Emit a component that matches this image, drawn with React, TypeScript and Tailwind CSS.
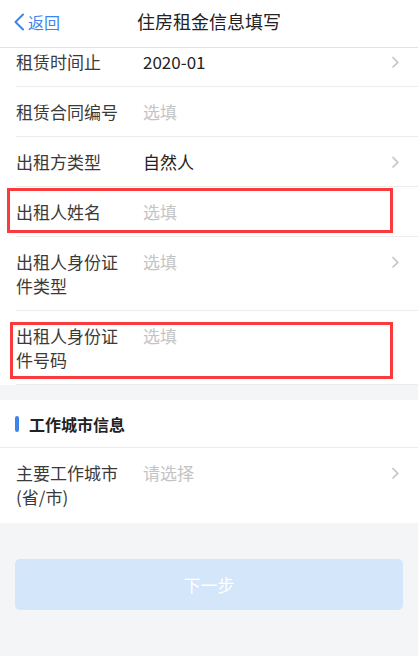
const font = "font-['Noto_Sans_CJK_SC','Noto_Sans',sans-serif]";

type Row = {
  label: string;
  value?: string;
  placeholder?: string;
  arrow?: boolean;
  marked?: "a" | "b";
};

const rows: Row[] = [
  { label: "租赁时间止", value: "2020-01", arrow: true },
  { label: "租赁合同编号", placeholder: "选填" },
  { label: "出租方类型", value: "自然人", arrow: true },
  { label: "出租人姓名", placeholder: "选填", marked: "a" },
  { label: "出租人身份证件类型", placeholder: "选填", arrow: true },
  { label: "出租人身份证件号码", placeholder: "选填", marked: "b" },
];

function Arrow() {
  return (
    <svg className="w-[10px] h-6 shrink-0" viewBox="0 0 10 24" fill="none">
      <path d="M3 7.5l4.8 4.8L3 17" stroke="#c6c6c6" strokeWidth="1.7" strokeLinecap="round" strokeLinejoin="round" />
    </svg>
  );
}

function FormRow({ row, first }: { row: Row; first?: boolean }) {
  return (
    <div className={`relative pl-4 ${first ? "-mt-[11px]" : ""}`}>
      <div className="flex items-start pt-[13px] pb-[12px] pr-[18px] border-b border-[#ececec]">
        <div className="w-[110px] shrink-0 text-[17px] leading-6 text-[#3a3a3a]">{row.label}</div>
        <div className="flex-1 ml-[17px] text-[17px] leading-6">
          {row.value ? (
            <span className="text-[#222]">{row.value}</span>
          ) : (
            <span className="text-[#c4c4c4]">{row.placeholder}</span>
          )}
        </div>
        {row.arrow && <Arrow />}
      </div>
      {/* red annotation boxes */}
      {row.marked === "a" && (
        <div className="absolute left-[7px] top-[1px] w-[386px] h-[45px] border-[3px] border-[#fa3a3c] pointer-events-none" />
      )}
      {row.marked === "b" && (
        <div className="absolute left-[10px] top-[11px] w-[383px] h-[57px] border-[3px] border-[#fa3a3c] pointer-events-none" />
      )}
    </div>
  );
}

export default function App() {
  return (
    <div className={`w-[418px] h-[656px] overflow-hidden bg-[#f4f5f7] flex flex-col ${font}`}>
      <div className="relative z-10 h-[48px] shrink-0 bg-white border-b border-[#e2e2e2] flex items-center justify-center">
        <div className="absolute left-[13px] top-0 h-[44px] flex items-center text-[#3d84ec]">
          <svg className="w-[12px] h-[18px]" viewBox="0 0 12 18" fill="none">
            <path d="M10 1.5L2.5 9l7.5 7.5" stroke="#3d84ec" strokeWidth="2" strokeLinecap="round" strokeLinejoin="round" />
          </svg>
          <span className="text-[16px] ml-[3px]">返回</span>
        </div>
        <div className="text-[18px] text-[#222] -mt-[5px]">住房租金信息填写</div>
      </div>

      <div className="bg-white">
        {rows.map((r, i) => (
          <FormRow key={r.label} row={r} first={i === 0} />
        ))}
      </div>

      <div className="mt-[15px] bg-white">
        <div className="h-[48px] flex items-center pl-[15px] border-b border-[#ececec]">
          <span className="w-[4px] h-[16px] rounded-full bg-[#3d84ec]" />
          <span className="ml-[10px] text-[16px] font-bold text-[#222]">工作城市信息</span>
        </div>
        <div className="pl-4">
          <div className="flex items-start pt-[13px] pb-[14px] pr-[18px]">
            <div className="w-[110px] shrink-0 text-[17px] leading-6 text-[#3a3a3a]">主要工作城市(省/市)</div>
            <div className="flex-1 ml-[17px] text-[17px] leading-6 text-[#c4c4c4]">请选择</div>
            <Arrow />
          </div>
        </div>
      </div>

      <div className="px-[15px] mt-[36px]">
        <button className="w-full h-[51px] rounded-[5px] bg-[#d3e6fa] text-white text-[17px]">下一步</button>
      </div>
    </div>
  );
}
